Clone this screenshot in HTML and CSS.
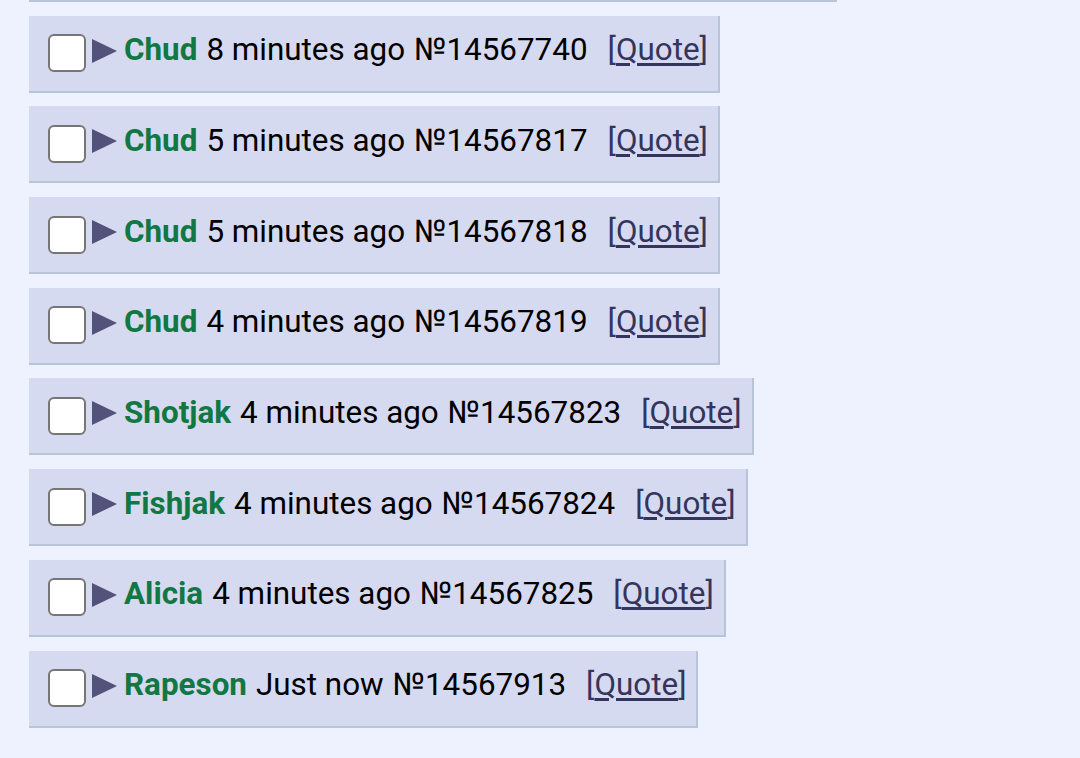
FILE: index.html
```html
<!DOCTYPE html>
<html lang="en">
<head>
    <meta charset="UTF-8">
    <meta name="viewport" content="width=device-width, initial-scale=1.0">
    <title>thread</title>
    <link rel="stylesheet" href="styles.css">
</head>
<body>
<div class="thread">
    <div class="reply-tail"></div>

    <div class="reply">
        <span class="check"></span>
        <svg class="arrow" viewBox="0 0 25 24"><polygon points="0,0 25,12 0,24"/></svg>
        <span class="name">Chud</span>
        <span class="date">8 minutes ago</span>
        <span class="num">№14567740</span>
        <span class="quote">[<a href="#">Quote</a>]</span>
    </div>
    <div class="reply">
        <span class="check"></span>
        <svg class="arrow" viewBox="0 0 25 24"><polygon points="0,0 25,12 0,24"/></svg>
        <span class="name">Chud</span>
        <span class="date">5 minutes ago</span>
        <span class="num">№14567817</span>
        <span class="quote">[<a href="#">Quote</a>]</span>
    </div>
    <div class="reply">
        <span class="check"></span>
        <svg class="arrow" viewBox="0 0 25 24"><polygon points="0,0 25,12 0,24"/></svg>
        <span class="name">Chud</span>
        <span class="date">5 minutes ago</span>
        <span class="num">№14567818</span>
        <span class="quote">[<a href="#">Quote</a>]</span>
    </div>
    <div class="reply">
        <span class="check"></span>
        <svg class="arrow" viewBox="0 0 25 24"><polygon points="0,0 25,12 0,24"/></svg>
        <span class="name">Chud</span>
        <span class="date">4 minutes ago</span>
        <span class="num">№14567819</span>
        <span class="quote">[<a href="#">Quote</a>]</span>
    </div>
    <div class="reply">
        <span class="check"></span>
        <svg class="arrow" viewBox="0 0 25 24"><polygon points="0,0 25,12 0,24"/></svg>
        <span class="name">Shotjak</span>
        <span class="date">4 minutes ago</span>
        <span class="num">№14567823</span>
        <span class="quote">[<a href="#">Quote</a>]</span>
    </div>
    <div class="reply">
        <span class="check"></span>
        <svg class="arrow" viewBox="0 0 25 24"><polygon points="0,0 25,12 0,24"/></svg>
        <span class="name">Fishjak</span>
        <span class="date">4 minutes ago</span>
        <span class="num">№14567824</span>
        <span class="quote">[<a href="#">Quote</a>]</span>
    </div>
    <div class="reply">
        <span class="check"></span>
        <svg class="arrow" viewBox="0 0 25 24"><polygon points="0,0 25,12 0,24"/></svg>
        <span class="name">Alicia</span>
        <span class="date">4 minutes ago</span>
        <span class="num">№14567825</span>
        <span class="quote">[<a href="#">Quote</a>]</span>
    </div>
    <div class="reply">
        <span class="check"></span>
        <svg class="arrow" viewBox="0 0 25 24"><polygon points="0,0 25,12 0,24"/></svg>
        <span class="name">Rapeson</span>
        <span class="date">Just now</span>
        <span class="num">№14567913</span>
        <span class="quote">[<a href="#">Quote</a>]</span>
    </div>
</div>
</body>
</html>
```

FILE: styles.css
```css
*{
    margin:0;
    padding:0;
    box-sizing:border-box;
}
body{
    background-color:#eef2ff;
    font-family:Roboto, "Liberation Sans", sans-serif;
    font-size:31.4px;
    color:#000;
}
.thread{
    padding-left:29px;
    display:flex;
    flex-direction:column;
    align-items:flex-start;
    gap:13.7px;
}
.reply-tail{
    width:808px;
    height:2px;
    background-color:#b7c5d9;
}
.reply{
    display:flex;
    align-items:center;
    height:77px;
    padding:0 10px 7px 19px;
    background-color:#d6daf0;
    border-right:2px solid #b7c5d9;
    border-bottom:2px solid #b7c5d9;
    white-space:nowrap;
}
.check{
    width:38px;
    height:38px;
    background-color:#fff;
    border:2.5px solid #767676;
    border-radius:6px;
    margin-top:7px;
}
.arrow{
    width:25px;
    height:24px;
    margin:2px 7px 0 6px;
    fill:#52527a;
}
.name{
    color:#117743;
    font-weight:bold;
}
.date{
    margin-left:9px;
}
.num{
    margin-left:9px;
}
.quote{
    margin-left:20px;
    color:#34345c;
}
.quote a{
    color:#34345c;
    text-underline-offset:3px;
}
```
